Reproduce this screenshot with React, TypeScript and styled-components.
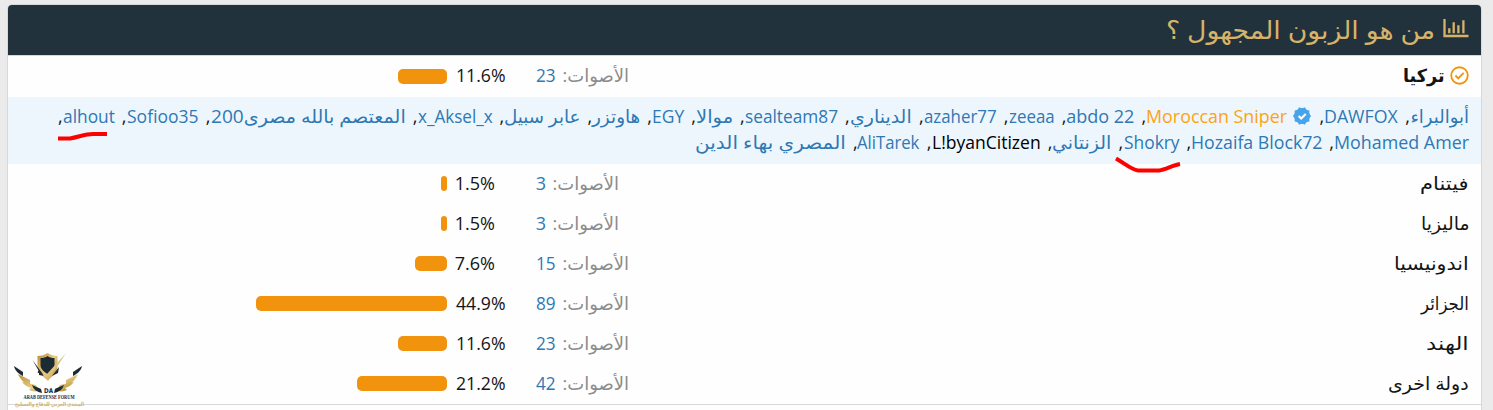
import * as React from 'react'
import styled, { createGlobalStyle } from 'styled-components'

const fonts = `'Open Sans', 'Noto Sans', 'DejaVu Sans', sans-serif`

type VoterData = { name: string; width: number; color?: string; verified?: boolean }

const link = '#2f78b3'

const voterLines: VoterData[][] = [
  [
    { name: 'أبوالبراء', width: 59 },
    { name: 'DAWFOX', width: 74 },
    { name: 'Moroccan Sniper', width: 141, color: '#ffa310', verified: true },
    { name: 'abdo 22', width: 68 },
    { name: 'zeeaa', width: 46 },
    { name: 'azaher77', width: 73 },
    { name: 'الديناري', width: 62 },
    { name: 'sealteam87', width: 93 },
    { name: 'موالا', width: 37 },
    { name: 'EGY', width: 32 },
    { name: 'هاوتزر', width: 48 },
    { name: 'عابر سبيل', width: 76 },
    { name: 'x_Aksel_x', width: 75 },
    { name: 'المعتصم بالله مصرى200', width: 195 },
    { name: 'Sofioo35', width: 72 },
    { name: 'alhout', width: 52 },
  ],
  [
    { name: 'Mohamed Amer', width: 135 },
    { name: 'Hozaifa Block72', width: 131 },
    { name: 'Shokry', width: 56 },
    { name: 'الزنتاني', width: 59 },
    { name: 'L!byanCitizen', width: 109, color: '#000' },
    { name: 'AliTarek', width: 62 },
    { name: 'المصري بهاء الدين', width: 151 },
  ],
]

const options = [
  { name: 'فيتنام', width: 49, votes: 3, percent: 1.5 },
  { name: 'ماليزيا', width: 48, votes: 3, percent: 1.5 },
  { name: 'اندونيسيا', width: 75, votes: 15, percent: 7.6 },
  { name: 'الجزائر', width: 48, votes: 89, percent: 44.9 },
  { name: 'الهند', width: 43, votes: 23, percent: 11.6 },
  { name: 'دولة اخرى', width: 81, votes: 42, percent: 21.2 },
]

// Condenses or stretches a run of text so it fills exactly `width` pixels
function Fit({ width, children }: { width: number; children: React.ReactNode }) {
  const ref = React.useRef<HTMLElement>(null)

  React.useLayoutEffect(() => {
    const el = ref.current
    if (!el) return
    el.style.transform = `scaleX(${width / el.offsetWidth})`
  }, [width, children])

  return (
    <FitBox $width={width}>
      <FitText ref={ref}>{children}</FitText>
    </FitBox>
  )
}

function Voter({ voter, last }: { voter: VoterData; last?: boolean }) {
  return (
    <VoterItem $color={voter.color ?? link}>
      {voter.verified && <VerifiedBadge />}
      <Fit width={voter.width}>{voter.name}</Fit>
      {!last && <Comma>,</Comma>}
    </VoterItem>
  )
}

type ResultProps = { votes: number; percent: number; children: React.ReactNode }

function Result({ votes, percent, children }: ResultProps) {
  return (
    <Row>
      <Option>{children}</Option>
      <Votes>
        <Fit width={67}>الأصوات:</Fit>
        <Fit width={votes > 9 ? 20 : 10}>{votes}</Fit>
      </Votes>
      <Percent>
        <Fit width={percent > 9 ? 50 : 40}>{percent}%</Fit>
      </Percent>
      <Track>
        <Bar style={{ width: `${percent}%` }} />
      </Track>
    </Row>
  )
}

function VerifiedBadge() {
  return (
    <BadgeIcon viewBox="0 0 24 24">
      <circle cx="12" cy="12" r="9.5" fill="#46a4ea" />
      <path
        fill="#46a4ea"
        d="M23 12l-2.44-2.78.34-3.68-3.61-.82-1.89-3.18L12 3 8.6 1.54 6.71 4.72l-3.61.81.34 3.68L1 12l2.44 2.78-.34 3.69 3.61.82 1.89 3.18L12 21l3.4 1.46 1.89-3.18 3.61-.82-.34-3.68z"
      />
      <path d="M8 12l3 3 5.5-5.5" fill="none" stroke="#fff" strokeWidth="2.6" />
    </BadgeIcon>
  )
}

function ForumLogo() {
  return (
    <Logo viewBox="0 0 74 58">
      <defs>
        <linearGradient id="gold" x1="0" y1="0" x2="1" y2="1">
          <stop offset="0" stopColor="#b98c33" />
          <stop offset="0.5" stopColor="#e5cb86" />
          <stop offset="1" stopColor="#b08530" />
        </linearGradient>
      </defs>
      <path fill="url(#gold)" d="M34.5 2c3 2 6 3 10 3v9c0 7-4 11-10 15-6-4-10-8-10-15V5c4 0 7-1 10-3z" />
      <path fill="#1b2a33" d="M34.5 5c2 1.5 4 2 7 2v7c0 4-3 6-7 9-4-3-7-5-7-9V7c3 0 5-.5 7-2z" />
      <path fill="url(#gold)" d="M53 2L35 30 25 18l9 5z" />
      <path fill="#1b2a33" d="M19.5 9l11 15-6-2.5 1-2zM46 16l-1 6-6 3zM26 21l5 4-5-1z" />
      <path fill="#1b2a33" d="M1 15l9 6v4c-4-2-8-5-9-10zM69 15l-9 6v4c4-2 8-5 9-10z" />
      <path
        fill="url(#gold)"
        d="M5 23l12 6v4c-6 0-10-5-12-10zM9 31l14 3 3 4c-7 0-13-2-17-7zM16 39c3-4 7-4 12-1-3 3-8 3-12 1zM65 23l-12 6v4c6 0 10-5 12-10zM61 31l-14 3-3 4c7 0 13-2 17-7zM54 39c-3-4-7-4-12-1 3 3 8 3 12 1z"
      />
      <path fill="#1b2a33" d="M19 34l9 4 1 4c-5-1-8-3-10-8zM51 34l-9 4-1 4c5-1 8-3 10-8z" />
      <LogoText x="35.5" y="41.5" $size={6.5} $heavy textLength="9">
        DA
      </LogoText>
      <LogoText x="36" y="48" $size={6} textLength="51">
        ARAB DEFENSE FORUM
      </LogoText>
      <LogoText x="36.5" y="55" $size={5.5} $gold textLength="69">
        المنتدى العربي للدفاع والتسليح
      </LogoText>
    </Logo>
  )
}

export default function App() {
  return (
    <>
      <GlobalStyle />
      <Panel>
        <Header>
          <ChartIcon viewBox="0 0 26 20">
            <path d="M1.5 0v17H25.5M6.3 9.3v5M10.7 3.3v11M15.4 6.3v8M20.4 1.3v13" />
          </ChartIcon>
          <Fit width={269}>من هو الزبون المجهول ؟</Fit>
        </Header>
        <Result votes={23} percent={11.6}>
          <Chosen>
            <CheckIcon viewBox="0 0 20 20">
              <circle cx="10" cy="10" r="8.7" />
              <path d="M5.7 10l3 3 5.7-5.7" />
            </CheckIcon>
            <Fit width={42}>تركيا</Fit>
          </Chosen>
        </Result>
        <Voters>
          {voterLines.map((line, i) => (
            <VoterLine key={i}>
              {line.map((voter, j) => (
                <Voter
                  key={voter.name}
                  voter={voter}
                  last={i === voterLines.length - 1 && j === line.length - 1}
                />
              ))}
            </VoterLine>
          ))}
          <AlhoutMark viewBox="0 0 52 10">
            <path d="M1 7.5h12C22 6 28 3 36 3h14" />
          </AlhoutMark>
          <ShokryMark viewBox="0 0 70 18">
            <path d="M2 2.5C10 7 18 14 24 14.5h21c7-1 13-5 21-6.5" />
          </ShokryMark>
        </Voters>
        {options.map((option) => (
          <Result key={option.name} votes={option.votes} percent={option.percent}>
            <Fit width={option.width}>{option.name}</Fit>
          </Result>
        ))}
        <Footer />
        <ForumLogo />
      </Panel>
    </>
  )
}

const GlobalStyle = createGlobalStyle`
  body {
    margin: 0;
    overflow: hidden;
    background: #ebebeb;
    font: 18px/26px ${fonts};
    color: #141414;
  }
`

const Panel = styled.main`
  direction: rtl;
  position: relative;
  box-sizing: border-box;
  height: 412px;
  margin: 4px 11px 0 7px;
  border: 1px solid #d8d8d8;
  border-radius: 5px;
  background: #fefefe;
`

const Header = styled.header`
  display: flex;
  align-items: center;
  gap: 8px;
  height: 48px;
  padding: 0 12px 2px;
  border-bottom: 1px solid #d3d9dc;
  border-radius: 4px 4px 0 0;
  background: #22323c;
  color: #d6b36a;
  font-size: 25px;
  line-height: 48px;
`

const ChartIcon = styled.svg`
  width: 26px;
  height: 20px;
  fill: none;
  stroke: currentColor;
  stroke-width: 2.3;
`

const FitBox = styled.span<{ $width: number }>`
  display: inline-flex;
  flex: none;
  width: ${(p) => p.$width}px;
  white-space: nowrap;
`

const FitText = styled.bdi`
  flex: none;
  transform-origin: right center;
`

const Row = styled.div`
  display: grid;
  grid-template-columns: 1fr 110px 81px 8px 425px;
  align-items: center;
  height: 39px;
  padding: 0 12px 1px 14px;

  ${Header} + & {
    height: 40px;
  }
`

const Option = styled.div`
  display: flex;
  padding-bottom: 2px;
`

const Chosen = styled.strong`
  display: flex;
  align-items: center;
  gap: 5px;
`

const CheckIcon = styled.svg`
  width: 19px;
  height: 19px;
  fill: none;
  stroke: #f2930d;
  stroke-width: 1.9;
`

const Votes = styled.div`
  display: flex;
  justify-content: flex-end;
  gap: 6px;
  padding-bottom: 2px;
  color: #8c8c8c;

  & > :last-child {
    color: ${link};
  }
`

const Percent = styled.div`
  display: flex;
  justify-content: flex-end;
  padding-bottom: 2px;
`

const Track = styled.div`
  grid-column: 5;
`

const Bar = styled.div`
  height: 15px;
  border-radius: 5px;
  background: #f2930d;
`

const Voters = styled.div`
  position: relative;
  height: 59px;
  padding: 6px 12px 2px;
  background: #edf6fd;
`

const VoterLine = styled.div`
  display: flex;
  height: 26px;
`

const VoterItem = styled.span<{ $color: string }>`
  display: flex;
  align-items: center;
  color: ${(p) => p.$color};
`

const Comma = styled.span`
  width: 11.9px;
  color: #141414;
`

const BadgeIcon = styled.svg`
  width: 20px;
  height: 20px;
  margin-left: 5px;
`

const Mark = styled.svg`
  position: absolute;
  fill: none;
  stroke: #f00;
  stroke-width: 4;
`

const AlhoutMark = styled(Mark)`
  left: 49px;
  top: 34px;
  width: 52px;
  height: 10px;
`

const ShokryMark = styled(Mark)`
  left: 1106px;
  top: 59px;
  width: 70px;
  height: 18px;
`

const Footer = styled.footer`
  border-top: 1px solid #d8d8d8;
`

const Logo = styled.svg`
  position: absolute;
  left: 5px;
  top: 346px;
  width: 74px;
  height: 58px;
  overflow: visible;
`

const LogoText = styled.text.attrs({
  textAnchor: 'middle',
  lengthAdjust: 'spacingAndGlyphs',
})<{ $size: number; $gold?: boolean; $heavy?: boolean }>`
  direction: ltr;
  font: bold ${(p) => p.$size}px ${(p) => (p.$heavy ? `'DejaVu Sans'` : `'Liberation Serif', 'DejaVu Sans'`)}, serif;
  fill: ${(p) => (p.$gold ? '#d6b36a' : '#1b2a33')};
`
